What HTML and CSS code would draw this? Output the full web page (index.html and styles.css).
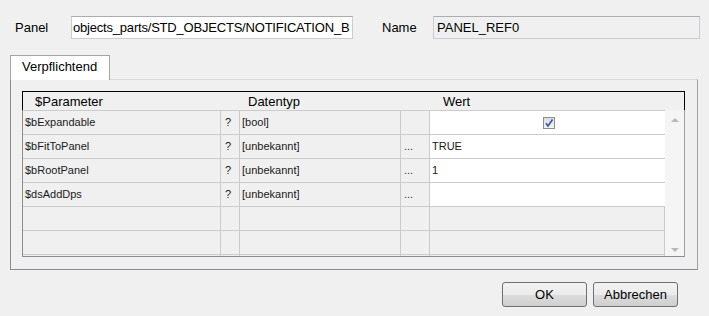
FILE: index.html
```html
<!DOCTYPE html>
<html lang="en">
<head>
    <meta charset="UTF-8">
    <title>Panel Parameter</title>
    <link rel="stylesheet" href="styles.css">
</head>
<body>
    <div class="top-row">
        <span class="field-label label-panel">Panel</span>
        <div class="field field-panel">objects_parts/STD_OBJECTS/NOTIFICATION_B</div>
        <span class="field-label label-name">Name</span>
        <div class="field field-name">PANEL_REF0</div>
    </div>

    <div class="tabs">
        <div class="tab">Verpflichtend</div>
    </div>

    <div class="pane">
        <div class="table-head">
            <span class="head-param">$Parameter</span>
            <span class="head-type">Datentyp</span>
            <span class="head-value">Wert</span>
        </div>
        <div class="table-body">
            <div class="rows">
                <div class="row">
                    <div class="cell">$bExpandable</div>
                    <div class="cell center">?</div>
                    <div class="cell">[bool]</div>
                    <div class="cell"></div>
                    <div class="cell value check-cell"><span class="checkbox">
                        <svg width="10" height="10" viewBox="0 0 10 10"><path d="M2 5.2 L4 8 L8.5 1.5" fill="none" stroke="#3a56a8" stroke-width="1.6"/></svg>
                    </span></div>
                </div>
                <div class="row">
                    <div class="cell">$bFitToPanel</div>
                    <div class="cell center">?</div>
                    <div class="cell">[unbekannt]</div>
                    <div class="cell dots">...</div>
                    <div class="cell value">TRUE</div>
                </div>
                <div class="row">
                    <div class="cell">$bRootPanel</div>
                    <div class="cell center">?</div>
                    <div class="cell">[unbekannt]</div>
                    <div class="cell dots">...</div>
                    <div class="cell value">1</div>
                </div>
                <div class="row">
                    <div class="cell">$dsAddDps</div>
                    <div class="cell center">?</div>
                    <div class="cell">[unbekannt]</div>
                    <div class="cell dots">...</div>
                    <div class="cell value"></div>
                </div>
                <div class="row">
                    <div class="cell"></div><div class="cell"></div><div class="cell"></div><div class="cell"></div><div class="cell"></div>
                </div>
                <div class="row">
                    <div class="cell"></div><div class="cell"></div><div class="cell"></div><div class="cell"></div><div class="cell"></div>
                </div>
                <div class="row">
                    <div class="cell"></div><div class="cell"></div><div class="cell"></div><div class="cell"></div><div class="cell"></div>
                </div>
            </div>
            <div class="scrollbar">
                <span class="arrow up"></span>
                <span class="arrow down"></span>
            </div>
        </div>
    </div>

    <div class="buttons">
        <button class="btn btn-ok">OK</button>
        <button class="btn">Abbrechen</button>
    </div>
</body>
</html>
```

FILE: styles.css
```css
/* dialog */
body {
    margin: 0;
    background-color: #f0f0f0;
    font-family: "Liberation Sans", Arial, sans-serif;
    font-size: 13px;
    color: #000;
    width: 709px;
    height: 316px;
    overflow: hidden;
}

.top-row {
    display: flex;
    align-items: center;
    padding-top: 16px;
    height: 23px;
}

.field-label {
    display: block;
}

.label-panel {
    margin-left: 15px;
    width: 56px;
}

.label-name {
    margin-left: 29px;
    width: 51px;
}

.field {
    box-sizing: border-box;
    height: 23px;
    line-height: 21px;
    border: 1px solid #c9ccd2;
    border-top-color: #abadb3;
    padding-left: 2px;
    white-space: nowrap;
    overflow: hidden;
}

.field-panel {
    width: 282px;
    padding-left: 1px;
    letter-spacing: -0.2px;
    background-color: #fff;
}

.field-name {
    width: 267px;
    padding-left: 3px;
    background-color: #f0f0f0;
}

/* tab */
.tabs {
    display: flex;
    margin-top: 16px;
    padding-left: 10px;
}

.tab {
    box-sizing: border-box;
    width: 100px;
    height: 25px;
    padding: 3px 0 0 11px;
    background-color: #fff;
    border: 1px solid #a5a5a5;
    border-bottom: none;
    position: relative;
    z-index: 1;
    margin-bottom: -1px;
}

.pane {
    box-sizing: border-box;
    margin-left: 10px;
    width: 688px;
    height: 191px;
    border: 1px solid #898c95;
    border-top-color: #d9d9d9;
    border-right-color: #a0a0a0;
    padding: 11px 0 0 11px;
}

/* table */
.table-head {
    box-sizing: border-box;
    position: relative;
    width: 663px;
    height: 19px;
    border: 1px solid #000;
    border-bottom: none;
    font-size: 13px;
}

.table-head span {
    position: absolute;
    top: 2px;
}

.head-param { left: 12px; }
.head-type { left: 225px; }
.head-value { left: 420px; }

.table-body {
    box-sizing: border-box;
    display: flex;
    width: 663px;
    height: 147px;
    border-left: 1px solid #8c8c8c;
    border-right: 1px solid #a0a0a0;
    border-bottom: 1px solid #8c8c8c;
    overflow: hidden;
}

.rows {
    width: 642px;
}

.row {
    display: grid;
    grid-template-columns: 198px 19px 161px 29px 235px;
    height: 24px;
    box-sizing: border-box;
    border-top: 1px solid #cbcbcb;
    font-size: 11px;
    color: #1a1a1a;
}

.cell {
    box-sizing: border-box;
    border-right: 1px solid #cbcbcb;
    padding-left: 2px;
    line-height: 22px;
    white-space: nowrap;
    overflow: hidden;
}

.cell.center {
    padding-left: 4px;
}

.cell.dots {
    padding-left: 3px;
    color: #333;
}

.cell.value {
    border-right: none;
    background-color: #fff;
}

.row:nth-child(n+5) .cell.value {
    background-color: transparent;
}

.check-cell {
    display: flex;
    justify-content: center;
    align-items: center;
    padding-left: 0;
}

.checkbox {
    box-sizing: border-box;
    display: flex;
    align-items: center;
    justify-content: center;
    width: 12px;
    height: 12px;
    margin-left: 2px;
    border: 1px solid #8e8f8f;
    background: linear-gradient(#dcdcdc, #f4f4f4);
}

.scrollbar {
    flex: 1;
    display: flex;
    flex-direction: column;
    justify-content: space-between;
    align-items: center;
    background-color: #f5f5f5;
    padding: 8px 0 4px;
}

.arrow {
    width: 0;
    height: 0;
    border-left: 4px solid transparent;
    border-right: 4px solid transparent;
}

.arrow.up {
    border-bottom: 4px solid #b8b8b8;
}

.arrow.down {
    border-top: 4px solid #b8b8b8;
}

/* buttons */
.buttons {
    display: flex;
    justify-content: flex-end;
    gap: 6px;
    margin-top: 12px;
    padding-right: 31px;
}

.btn {
    box-sizing: border-box;
    width: 85px;
    height: 25px;
    font-family: "Liberation Sans", Arial, sans-serif;
    font-size: 13px;
    color: #000;
    border: 1px solid #707070;
    border-radius: 3px;
    background: linear-gradient(#f2f2f2 0%, #ebebeb 50%, #dddddd 51%, #cfcfcf 100%);
    padding: 0;
}
```
